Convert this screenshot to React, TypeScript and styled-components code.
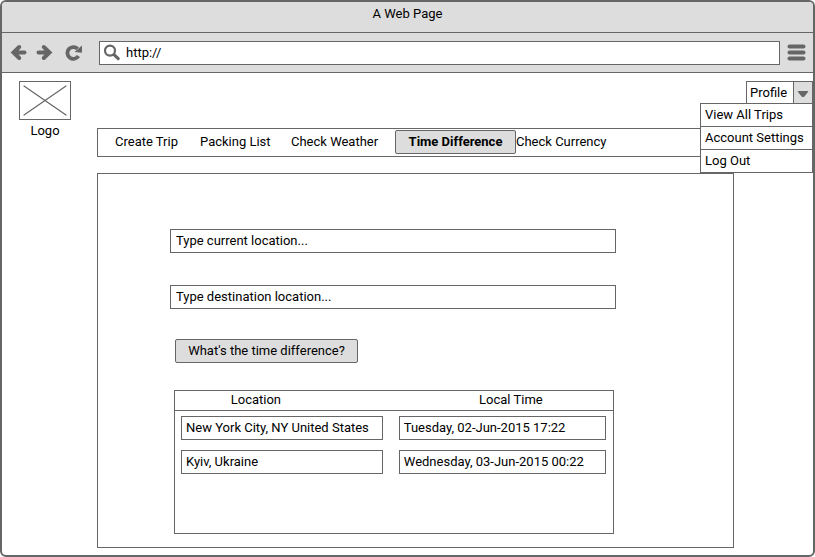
import React from "react";
import styled, { createGlobalStyle } from "styled-components";

const line = "#666666";
const shade = "#dddddd";

const GlobalStyle = createGlobalStyle`
  *, *::before, *::after { box-sizing: border-box; }
  body { margin: 0; background: #ffffff; }
  body, button, input, table {
    font-family: Roboto, "Open Sans", sans-serif;
    font-size: 13px;
    line-height: 18px;
    color: #000000;
  }
`;

const Frame = styled.div`
  display: flex;
  flex-direction: column;
  min-height: 100vh;
  border: 2px solid ${line};
  border-radius: 6px;
  overflow: hidden;
`;

const TitleBar = styled.header`
  height: 31px;
  padding-top: 3px;
  text-align: center;
  background: ${shade};
  border-bottom: 1px solid ${line};
`;

const Toolbar = styled.div`
  display: flex;
  align-items: center;
  height: 40px;
  padding: 0 7px 0 8px;
  background: ${shade};
  border-bottom: 1px solid ${line};
`;

const IconButton = styled.button<{ $gap?: number }>`
  display: flex;
  flex: none;
  margin: 0 ${(p) => p.$gap ?? 0}px 0 0;
  padding: 0;
  border: 0;
  background: none;
`;

const AddressBox = styled.label`
  display: flex;
  flex: 1;
  align-items: center;
  gap: 5px;
  height: 24px;
  margin-right: 7px;
  padding-left: 3px;
  border: 1px solid ${line};
  background: #ffffff;
`;

const AddressInput = styled.input`
  flex: 1;
  min-width: 0;
  padding: 1px 0 0;
  border: 0;
  outline: 0;
  background: none;
`;

const Page = styled.div`
  display: grid;
  grid-template-columns: 95px minmax(0, 1fr) 79px;
  grid-template-rows: 55px auto 1fr;
  flex: 1;
  padding-bottom: 7px;
`;

const Brand = styled.figure`
  display: flex;
  flex-direction: column;
  align-items: center;
  grid-row: 1 / 3;
  width: 52px;
  height: 60px;
  margin: 8px 0 0 17px;
`;

const BrandImage = styled.svg`
  flex: none;
  border: 1px solid ${line};
`;

const BrandCaption = styled.figcaption`
  padding-top: 2px;
`;

const Account = styled.div`
  position: relative;
  grid-column: 2 / 4;
  grid-row: 1;
  justify-self: end;
  padding-top: 8px;
`;

const ProfileButton = styled.button`
  display: flex;
  width: 67px;
  height: 23px;
  padding: 0;
  border: 1px solid ${line};
  background: #ffffff;
`;

const ProfileLabel = styled.span`
  flex: 1;
  padding: 2px 0 0 3px;
  text-align: left;
`;

const ProfileArrow = styled.span`
  display: flex;
  align-items: center;
  justify-content: center;
  align-self: stretch;
  width: 19px;
  padding-top: 3px;
  border-left: 1px solid ${line};
  background: ${shade};
`;

const Menu = styled.ul`
  position: absolute;
  top: 30px;
  right: 0;
  z-index: 1;
  width: 113px;
  margin: 0;
  padding: 0;
  list-style: none;
  border: 1px solid ${line};
  background: #ffffff;
`;

const MenuItem = styled.li`
  & + & { border-top: 1px solid ${line}; }
`;

const MenuLink = styled.a`
  display: block;
  height: 22px;
  padding: 2px 0 0 4px;
  color: inherit;
  text-decoration: none;
  white-space: nowrap;
`;

const Nav = styled.nav`
  display: grid;
  grid-template-columns: 85px 91px 104px 121px 1fr;
  grid-column: 2;
  height: 29px;
  padding: 1px 0 0 17px;
  border: 1px solid ${line};
`;

const NavLink = styled.a<{ $active?: boolean }>`
  height: 24px;
  padding: 2px 0 0;
  border: 1px solid ${(p) => (p.$active ? line : "transparent")};
  border-width: 1px ${(p) => (p.$active ? 1 : 0)}px;
  border-radius: 2px;
  background: ${(p) => (p.$active ? shade : "transparent")};
  font-weight: ${(p) => (p.$active ? 700 : 400)};
  text-align: ${(p) => (p.$active ? "center" : "left")};
  color: inherit;
  text-decoration: none;
  white-space: nowrap;
`;

const Panel = styled.main`
  grid-column: 2;
  margin-top: 16px;
  padding: 55px 117px 13px 72px;
  border: 1px solid ${line};
`;

const Form = styled.form`
  display: flex;
  flex-direction: column;
`;

const TextBox = styled.input`
  display: block;
  width: 100%;
  height: 24px;
  padding: 0 0 2px 4px;
  border: 1px solid ${line};
  border-radius: 0;
  outline: 0;
  background: #ffffff;
  &::placeholder { color: #000000; opacity: 1; }
`;

const LocationBox = styled(TextBox)`
  margin-bottom: 32px;
  padding-left: 5px;
`;

const SubmitButton = styled.button`
  align-self: flex-start;
  width: 183px;
  height: 24px;
  margin: -2px 0 27px 5px;
  padding: 0 0 1px;
  border: 1px solid ${line};
  border-radius: 2px;
  background: ${shade};
  white-space: nowrap;
`;

const Results = styled.div`
  height: 144px;
  margin: 0 2px 0 4px;
  border: 1px solid ${line};
`;

const Table = styled.table`
  width: 100%;
  table-layout: fixed;
  border-collapse: separate;
  border-spacing: 0;
`;

const HeadCell = styled.th<{ $first?: boolean }>`
  width: ${(p) => (p.$first ? "49.5%" : "auto")};
  height: 20px;
  padding: ${(p) => (p.$first ? "0 55px 1px 0" : "0 0 1px 17px")};
  border-bottom: 1px solid ${line};
  font-weight: 400;
`;

const Cell = styled.td<{ $first?: boolean }>`
  padding: ${(p) => (p.$first ? "5px 9px 5px 6px" : "5px 7px 5px 7px")};
`;

const NavIcons = {
  back: (
    <svg width="17" height="17" viewBox="0 0 17 17" fill="none" stroke={line} strokeWidth="4">
      <path d="M9.2 3 3.5 8.5 9.2 14M4.5 8.5h10" strokeLinecap="round" strokeLinejoin="miter" />
    </svg>
  ),
  forward: (
    <svg width="17" height="17" viewBox="0 0 17 17" fill="none" stroke={line} strokeWidth="4">
      <path d="M7.8 3l5.7 5.5L7.8 14M12.5 8.5h-10" strokeLinecap="round" strokeLinejoin="miter" />
    </svg>
  ),
  reload: (
    <svg width="17" height="17" viewBox="0 0 17 17" fill="none">
      <path d="M12.6 4.9A5.9 5.9 0 1 0 13.4 12" stroke={line} strokeWidth="3.8" />
      <path d="M17 1.4V8.8L9.6 8z" fill={line} />
    </svg>
  ),
};

const sections = [
  { label: "Create Trip" },
  { label: "Packing List" },
  { label: "Check Weather" },
  { label: "Time Difference", active: true },
  { label: "Check Currency" },
];

const times = [
  { place: "New York City, NY United States", time: "Tuesday, 02-Jun-2015 17:22" },
  { place: "Kyiv, Ukraine", time: "Wednesday, 03-Jun-2015 00:22" },
];

export default function App() {
  return (
    <>
      <GlobalStyle />
      <Frame>
        <TitleBar>A Web Page</TitleBar>
        <Toolbar>
          <IconButton $gap={9} aria-label="Back">{NavIcons.back}</IconButton>
          <IconButton $gap={12} aria-label="Forward">{NavIcons.forward}</IconButton>
          <IconButton $gap={17} aria-label="Reload">{NavIcons.reload}</IconButton>
          <AddressBox>
            <svg width="18" height="18" viewBox="0 0 18 18" fill="none" stroke={line}>
              <circle cx="7" cy="6.6" r="5" strokeWidth="2.2" />
              <path d="M11.3 10.8l3.9 3.8" strokeWidth="3.2" strokeLinecap="round" />
            </svg>
            <AddressInput type="text" aria-label="Address" defaultValue="http://" />
          </AddressBox>
          <IconButton aria-label="Menu">
            <svg width="19" height="17" viewBox="0 0 19 17" fill={line}>
              <rect x="0.5" y="0.5" width="18" height="4" rx="2" />
              <rect x="0.5" y="6.5" width="18" height="4" rx="2" />
              <rect x="0.5" y="12.5" width="18" height="4" rx="2" />
            </svg>
          </IconButton>
        </Toolbar>
        <Page>
          <Brand>
            <BrandImage width="52" height="39" viewBox="0 0 50 37" stroke={line} strokeWidth="1.2" aria-hidden="true">
              <path d="M4 4l42 29M46 4L4 33" strokeLinecap="round" />
            </BrandImage>
            <BrandCaption>Logo</BrandCaption>
          </Brand>
          <Account>
            <ProfileButton aria-haspopup="menu" aria-expanded="true">
              <ProfileLabel>Profile</ProfileLabel>
              <ProfileArrow>
                <svg width="12" height="8" viewBox="0 0 12 8" fill={line} stroke={line} strokeLinejoin="round">
                  <path d="M1.2 1.5h9.6L7 6.5H5z" />
                </svg>
              </ProfileArrow>
            </ProfileButton>
            <Menu>
              {["View All Trips", "Account Settings", "Log Out"].map((item) => (
                <MenuItem key={item}>
                  <MenuLink href="#">{item}</MenuLink>
                </MenuItem>
              ))}
            </Menu>
          </Account>
          <Nav>
            {sections.map((s) => (
              <NavLink key={s.label} href="#" $active={s.active} aria-current={s.active ? "page" : undefined}>
                {s.label}
              </NavLink>
            ))}
          </Nav>
          <Panel>
            <Form onSubmit={(e) => e.preventDefault()}>
              <LocationBox type="text" aria-label="Current location" placeholder="Type current location..." />
              <LocationBox type="text" aria-label="Destination location" placeholder="Type destination location..." />
              <SubmitButton type="submit">What's the time difference?</SubmitButton>
            </Form>
            <Results>
              <Table>
                <thead>
                  <tr>
                    <HeadCell scope="col" $first>Location</HeadCell>
                    <HeadCell scope="col">Local Time</HeadCell>
                  </tr>
                </thead>
                <tbody>
                  {times.map((t) => (
                    <tr key={t.place}>
                      <Cell $first>
                        <TextBox type="text" readOnly aria-label="Location" value={t.place} />
                      </Cell>
                      <Cell>
                        <TextBox type="text" readOnly aria-label={`Local time in ${t.place}`} value={t.time} />
                      </Cell>
                    </tr>
                  ))}
                </tbody>
              </Table>
            </Results>
          </Panel>
        </Page>
      </Frame>
    </>
  );
}
